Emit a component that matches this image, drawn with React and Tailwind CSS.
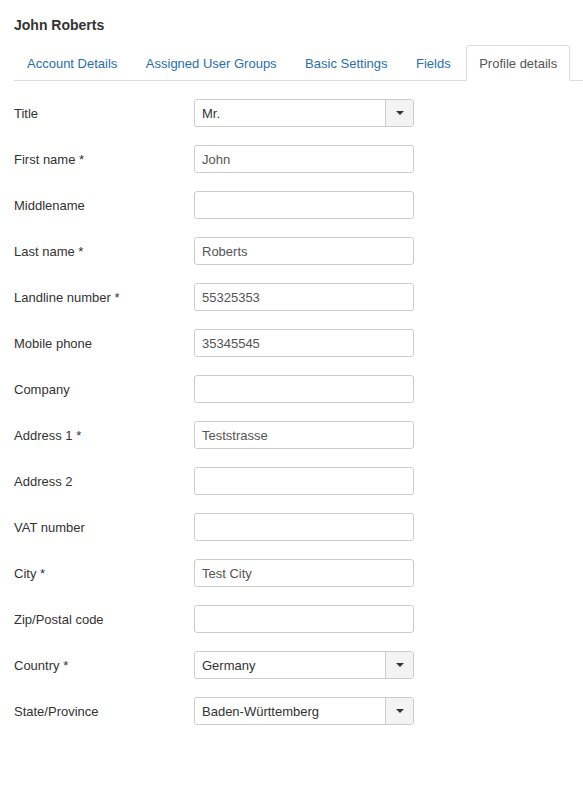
import React from 'react'

const tabs = ['Account Details', 'Assigned User Groups', 'Basic Settings', 'Fields', 'Profile details']

const fields = [
  { label: 'Title', value: 'Mr.', select: true },
  { label: 'First name *', value: 'John' },
  { label: 'Middlename', value: '' },
  { label: 'Last name *', value: 'Roberts' },
  { label: 'Landline number *', value: '55325353' },
  { label: 'Mobile phone', value: '35345545' },
  { label: 'Company', value: '' },
  { label: 'Address 1 *', value: 'Teststrasse' },
  { label: 'Address 2', value: '' },
  { label: 'VAT number', value: '' },
  { label: 'City *', value: 'Test City' },
  { label: 'Zip/Postal code', value: '' },
  { label: 'Country *', value: 'Germany', select: true },
  { label: 'State/Province', value: 'Baden-Württemberg', select: true },
]

function Caret() {
  return (
    <svg width="8" height="4" viewBox="0 0 8 4">
      <path d="M0 0h8L4 4z" fill="#333" />
    </svg>
  )
}

export default function App() {
  return (
    <div
      className="min-h-screen bg-white pl-[14px] pt-[16px] text-[13px] text-[#333]"
      style={{ fontFamily: '"Liberation Sans", Arial, sans-serif' }}
    >
      {/* 제목 */}
      <h1 className="text-[14px] font-bold leading-[18px] text-[#333]">John Roberts</h1>

      {/* 탭 */}
      <div className="mt-[11px] flex border-b border-[#ddd]">
        {tabs.map((t, i) => {
          const active = i === tabs.length - 1
          return (
            <div
              key={t}
              className={
                active
                  ? '-mb-px mr-[2.5px] rounded-t-[4px] border border-[#ddd] border-b-white bg-white px-[12px] pb-[7px] pt-[9px] leading-[17px] text-[#555]'
                  : 'mr-[2.5px] border border-transparent px-[12px] pb-[7px] pt-[9px] leading-[17px] text-[#2a6eae]'
              }
            >
              {t}
            </div>
          )
        })}
      </div>

      {/* 폼 */}
      <div className="mt-[18px] flex flex-col gap-[18px]">
        {fields.map((f) => (
          <div key={f.label} className="flex items-center">
            <label className="w-[180px] pt-[2px] leading-[18px] text-[#333]">{f.label}</label>
            <div className="flex h-[28px] w-[220px] items-stretch overflow-hidden rounded-[3px] border border-[#ccc] bg-white">
              <div className={'flex flex-1 items-center px-[7px] pt-[2px] ' + (f.select ? 'text-[#333]' : 'text-[#555]')}>
                {f.value}
              </div>
              {f.select && (
                <div className="flex w-[28px] items-center justify-center border-l border-[#ccc] bg-[#f3f3f3]">
                  <Caret />
                </div>
              )}
            </div>
          </div>
        ))}
      </div>
    </div>
  )
}
